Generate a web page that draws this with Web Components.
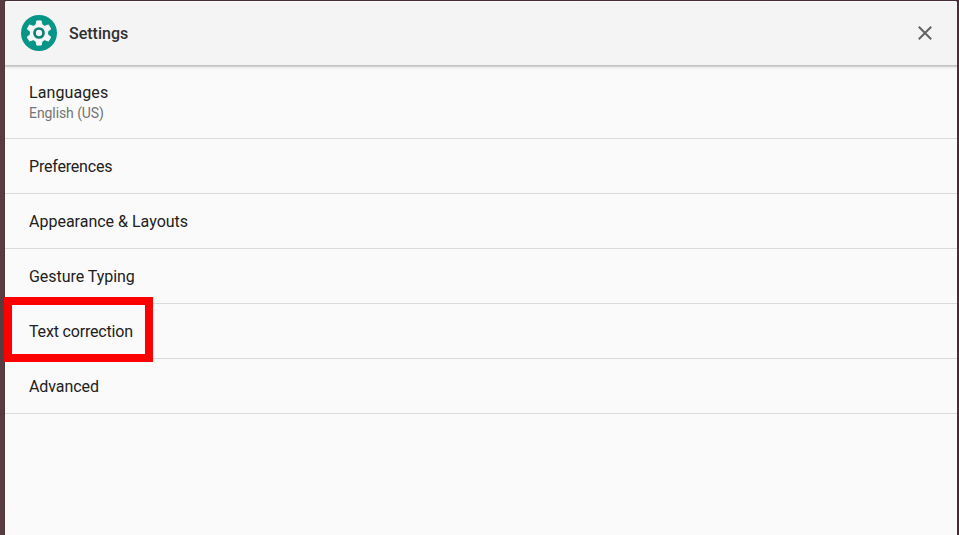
<!DOCTYPE html>
<html lang="en">

<head>
    <meta charset="utf-8">
    <title>Settings</title>
    <meta name="viewport" content="width=device-width, initial-scale=1">
    <style>
        body {
            margin: 0;
            height: 100vh;
            overflow: hidden;
            background: linear-gradient(90deg, #553c40 0, #593b40 4px, #452e37 5px, #472d39 100%);
            font-family: Roboto, sans-serif;
        }
    </style>
</head>

<body>
    <script>
        let define = (name, html) => customElements.define(name, class extends HTMLElement {
            constructor() {
                super();
                this.attachShadow({ mode: "open" }).innerHTML = html;
            }
        });

        define("settings-window", `
            <style>
                :host {
                    display: flex;
                    flex-direction: column;
                    box-sizing: border-box;
                    height: 100vh;
                    padding: 1px 2px 0 5px;
                }
                main {
                    flex: 1;
                    padding-top: 1px;
                    background: #fafafa;
                }
            </style>
            <slot name="header"></slot>
            <main><slot></slot></main>`);

        define("gear-icon", `
            <style>
                :host { display: block; width: 36px; height: 36px }
                svg { display: block }
            </style>
            <svg width="36" height="36" viewBox="-18 -18 36 36">
                <circle r="18" fill="#069688"/>
                <g fill="#f6f6f6" stroke="#f6f6f6" stroke-linejoin="round">
                    <circle r="9.2" stroke="none"/>
                    <path id="tooth" d="M-2.2-12.1H2.2L3-8V8L2.2 12.1H-2.2L-3 8V-8Z"/>
                    <use href="#tooth" transform="rotate(60)"/>
                    <use href="#tooth" transform="rotate(120)"/>
                </g>
                <circle r="4.5" fill="#f4f4f4" stroke="#0b8278" stroke-width="2.7"/>
            </svg>`);

        define("close-icon", `
            <style>
                :host { display: block; width: 14px; height: 14px }
                svg { display: block }
            </style>
            <svg width="14" height="14" fill="none" stroke="#616161" stroke-width="2">
                <path d="M.8.8 13.2 13.2M13.2.8.8 13.2"/>
            </svg>`);

        define("settings-header", `
            <style>
                :host {
                    display: flex;
                    align-items: center;
                    position: relative;
                    box-sizing: border-box;
                    height: 64px;
                    padding: 0 25px 0 16px;
                    background: #f4f4f4;
                    box-shadow: inset 0 1px #fbfbfb, 0 1px #c2c2c2, 0 2px #d2d2d2, 0 2px 3px #ccc;
                    border-radius: 2px 2px 0 0;
                    clip-path: inset(0 0 -6px 0);
                }
                h1 {
                    flex: 1;
                    margin: 1px 0 0 12px;
                    color: #303030;
                    font: 500 16px/20px Roboto, sans-serif;
                }
            </style>
            <gear-icon></gear-icon>
            <h1><slot></slot></h1>
            <close-icon></close-icon>`);

        define("settings-item", `
            <style>
                :host {
                    display: flex;
                    flex-direction: column;
                    justify-content: center;
                    position: relative;
                    box-sizing: border-box;
                    height: 55px;
                    padding: 2px 0 0 24px;
                    border-bottom: 1px solid #dadada;
                    color: #212121;
                    font-size: 16px;
                    line-height: 22px;
                    letter-spacing: var(--tracking, 0);
                }
                :host([detailed]) { height: 73px; padding-top: 0 }
                ::slotted(small) {
                    color: #757575;
                    font-size: 14px;
                    line-height: 19px;
                    letter-spacing: -.08px;
                }
                /* frame drawn over the row and its dividers */
                :host([marked])::after {
                    content: "";
                    position: absolute;
                    box-sizing: border-box;
                    left: -1px;
                    top: -7px;
                    width: 149px;
                    height: 65px;
                    border: 8px solid #f00;
                }
            </style>
            <span><slot></slot></span>
            <slot name="detail"></slot>`);
    </script>

    <settings-window>
        <settings-header slot="header">Settings</settings-header>
        <settings-item detailed style="--tracking: .1px">Languages<small slot="detail">English (US)</small></settings-item>
        <settings-item style="--tracking: -.2px">Preferences</settings-item>
        <settings-item>Appearance &amp; Layouts</settings-item>
        <settings-item style="--tracking: -.04px">Gesture Typing</settings-item>
        <settings-item marked style="--tracking: -.18px">Text correction</settings-item>
        <settings-item style="--tracking: -.08px">Advanced</settings-item>
    </settings-window>
</body>

</html>
